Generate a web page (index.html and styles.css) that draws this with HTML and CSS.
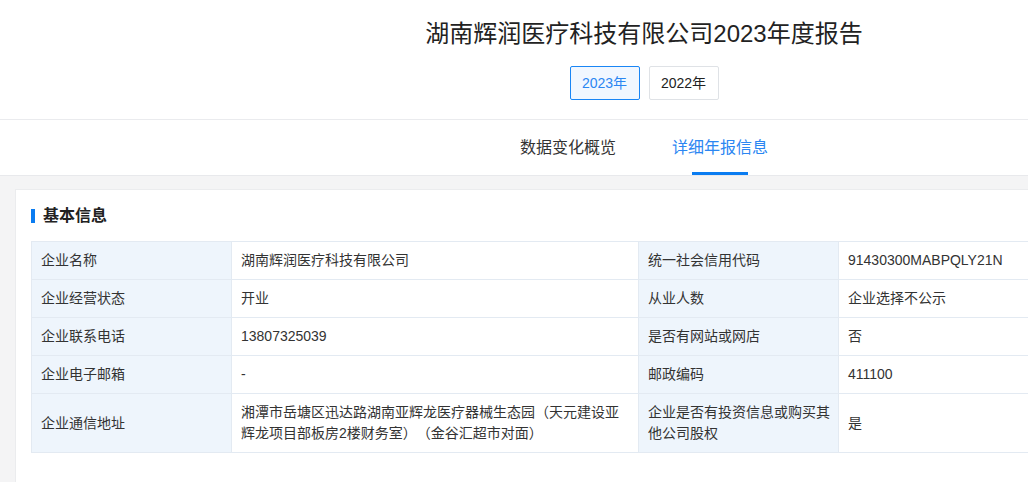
FILE: index.html
```
<!DOCTYPE html>
<html lang="zh-CN">

<head>
    <meta charset="UTF-8">
    <meta name="viewport" content="width=device-width, initial-scale=1.0">
    <title>年度报告</title>
    <link rel="stylesheet" href="styles.css">
</head>

<body>
    <div class="page">
        <div class="header">
            <h1 class="title">湖南辉润医疗科技有限公司2023年度报告</h1>
            <div class="years">
                <a class="year active">2023年</a>
                <a class="year">2022年</a>
            </div>
        </div>

        <div class="tabs">
            <span class="tab">数据变化概览</span>
            <span class="tab active">详细年报信息</span>
        </div>

        <div class="main">
            <div class="card">
                <h2 class="section-title">基本信息</h2>
                <table class="info">
                    <colgroup>
                        <col style="width: 200px">
                        <col style="width: 407px">
                        <col style="width: 200px">
                        <col>
                    </colgroup>
                    <tr>
                        <td class="label">企业名称</td>
                        <td>湖南辉润医疗科技有限公司</td>
                        <td class="label">统一社会信用代码</td>
                        <td>91430300MABPQLY21N</td>
                    </tr>
                    <tr>
                        <td class="label">企业经营状态</td>
                        <td>开业</td>
                        <td class="label">从业人数</td>
                        <td>企业选择不公示</td>
                    </tr>
                    <tr>
                        <td class="label">企业联系电话</td>
                        <td>13807325039</td>
                        <td class="label">是否有网站或网店</td>
                        <td>否</td>
                    </tr>
                    <tr>
                        <td class="label">企业电子邮箱</td>
                        <td>-</td>
                        <td class="label">邮政编码</td>
                        <td>411100</td>
                    </tr>
                    <tr>
                        <td class="label">企业通信地址</td>
                        <td>湘潭市岳塘区迅达路湖南亚辉龙医疗器械生态园（天元建设亚辉龙项目部板房2楼财务室）（金谷汇超市对面）</td>
                        <td class="label">企业是否有投资信息或购买其他公司股权</td>
                        <td>是</td>
                    </tr>
                </table>
            </div>
        </div>
    </div>
</body>

</html>
```

FILE: styles.css
```
html,
body {
    margin: 0;
    overflow: hidden;
}

body {
    font-family: "Liberation Sans", "Noto Sans CJK SC", sans-serif;
    color: #333;
    background-color: #f4f4f5;
}

.page {
    width: 1288px;
}

.header {
    background-color: #fff;
    text-align: center;
    height: 120px;
    padding-top: 17px;
    box-sizing: border-box;
    border-bottom: 1px solid #eaebee;
}

.title {
    margin: 0;
    font-size: 24px;
    line-height: 34px;
    font-weight: normal;
    color: #222;
}

.years {
    display: flex;
    justify-content: center;
    gap: 9px;
    margin-top: 15px;
}

.year {
    width: 70px;
    height: 34px;
    line-height: 32px;
    box-sizing: border-box;
    border: 1px solid #dfe2e6;
    border-radius: 2px;
    font-size: 14px;
    color: #222;
    background-color: #fff;
    cursor: pointer;
}

.year.active {
    border-color: #1a86f5;
    background-color: #f1f7ff;
    color: #2b86f2;
}

.tabs {
    background-color: #fff;
    height: 56px;
    box-sizing: border-box;
    border-bottom: 1px solid #e8e9ec;
    display: flex;
    justify-content: center;
    gap: 56px;
}

.tab {
    position: relative;
    font-size: 16px;
    line-height: 55px;
    color: #333;
    cursor: pointer;
}

.tab.active {
    color: #2b86f2;
}

.tab.active::after {
    content: "";
    position: absolute;
    left: 20px;
    right: 20px;
    bottom: 0;
    height: 3px;
    background-color: #0a7cf1;
}

.main {
    padding: 13px 15px 12px;
}

.card {
    background-color: #fff;
    border: 1px solid #ebecee;
    padding: 15px 15px 30px;
}

.section-title {
    margin: 0 0 14px;
    font-size: 16px;
    line-height: 22px;
    font-weight: bold;
    color: #222;
    display: flex;
    align-items: center;
    gap: 8px;
}

.section-title::before {
    content: "";
    width: 4px;
    height: 14px;
    background-color: #0a7cf1;
}

.info {
    width: 100%;
    table-layout: fixed;
    border-collapse: collapse;
    font-size: 14px;
    text-spacing-trim: space-all;
    font-feature-settings: "chws" 0, "halt" 0;
}

.info td {
    border: 1px solid #e3eaf2;
    padding: 8px 8px 8px 9px;
    line-height: 21px;
    vertical-align: middle;
    color: #333;
}

.info td.label {
    background-color: #eef5fc;
}
```
